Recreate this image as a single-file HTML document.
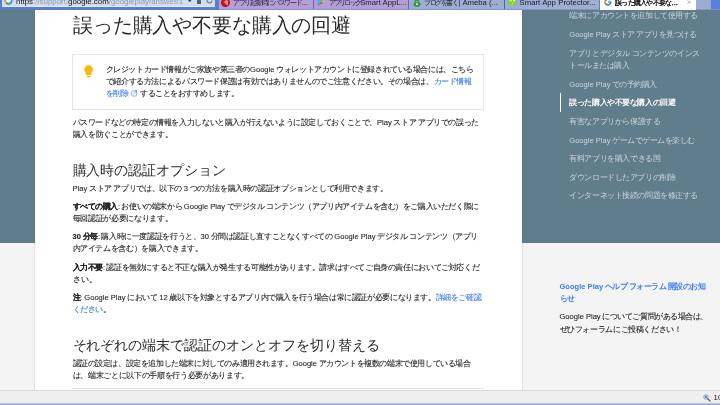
<!DOCTYPE html>
<html lang="ja">
<head>
<meta charset="utf-8">
<title>誤った購入や不要な購入の回避</title>
<style>
html,body{margin:0;padding:0;}
body{width:720px;height:405px;overflow:hidden;position:relative;background:#f4f4f4;font-family:"Liberation Sans",sans-serif;color:#333;}
#page{position:absolute;left:0;top:0;width:720px;height:405px;overflow:hidden;}
.abs{position:absolute;}
/* text lines */
.l{-webkit-text-stroke:0.1px;position:absolute;white-space:nowrap;font-size:7.55px;line-height:12px;height:12px;color:#242424;text-align:justify;text-align-last:justify;}
.e{letter-spacing:0;}
.tt .e{font-size:1.06em;}
.l b{font-weight:bold;color:#222;}
.l a{color:#3c7df0;text-decoration:none;}
.l.f{color:#3c7df0;font-weight:bold;-webkit-text-stroke:0;}
h1,h2{margin:0;font-weight:normal;position:absolute;white-space:nowrap;color:#2b2b2b;text-align:justify;text-align-last:justify;}
h1{font-size:19.85px;line-height:24px;height:24px;}
h2{font-size:13.95px;line-height:18px;height:18px;}
/* chrome */
#topbar{position:absolute;left:0;top:0;width:720px;height:10px;background:#587dcd;overflow:hidden;}
.tab{position:absolute;top:0;height:8.7px;overflow:hidden;}
.tt{position:absolute;font-size:7.3px;line-height:10px;height:10px;white-space:nowrap;color:#20202a;text-align:justify;text-align-last:justify;}
#art{will-change:transform;position:absolute;left:0;top:0;width:720px;height:405px;overflow:hidden;}
/* sidebar */
.sb{position:absolute;background:#607d8b;}
.s{position:absolute;white-space:nowrap;font-size:7.55px;line-height:12px;height:12px;color:#ccd6db;text-align:justify;text-align-last:justify;}
.s.on{color:#fff;font-weight:bold;}
</style>
</head>
<body>
<div id="page">

<!-- page background pieces -->
<div class="sb" style="left:0;top:9.6px;width:35px;height:233.4px;"></div>
<div class="sb" style="left:522px;top:9.6px;width:198px;height:233.4px;"></div>
<div class="abs" id="card" style="left:35px;top:9.6px;width:486.5px;height:381px;background:#fff;box-shadow:0 0 1.5px rgba(0,0,0,.28);"></div>

<!-- tip box + bulb -->
<div class="abs" id="tip" style="left:72px;top:54px;width:412.4px;height:56px;border:1px solid #e5e5e5;box-sizing:border-box;background:#fff;"></div>
<svg class="abs" style="left:84.1px;top:65px;" width="9.2" height="13" viewBox="0 0 9.2 13">
  <circle cx="4.6" cy="4.5" r="4.35" fill="#fbba0a"/>
  <path d="M1.9 7.2h5.4v3H1.9z" fill="#fbba0a"/>
  <rect x="2.7" y="11" width="3.8" height="1.6" rx="0.8" fill="#fbba0a"/>
</svg>
<div class="abs" style="left:72.2px;top:387.6px;width:412.3px;height:0.8px;background:#e2e2e2;"></div>
<div class="abs" style="left:559.8px;top:93.2px;width:1.2px;height:18.6px;background:#fff;"></div>


<!-- status bar -->
<div class="abs" style="left:0;top:390px;width:720px;height:15px;background:#efefef;border-top:0.8px solid #dadada;box-sizing:border-box;"></div>
<div class="abs" style="left:0;top:403px;width:720px;height:2px;background:linear-gradient(#c3cde8,#8ea3d6);"></div>
<svg class="abs" style="left:703.4px;top:393.8px;" width="8" height="8" viewBox="0 0 16 16">
  <circle cx="6" cy="6" r="4.6" fill="#dfe9f7" stroke="#8a94a6" stroke-width="1.6"/>
  <path d="M3.6 6h4.8M6 3.6v4.8" stroke="#2a62c9" stroke-width="1.8"/>
  <path d="M9.6 9.6L14 14" stroke="#8b5a2b" stroke-width="2.6" stroke-linecap="round"/>
</svg>

<!-- browser chrome: address bar + tabs (backgrounds and icons) -->
<div id="topbar">
  <div class="abs" style="left:2px;top:0;width:212.6px;height:7px;background:#d2dcf2;border-bottom:1px solid #e6ecf9;box-sizing:border-box;"></div>
  <div class="abs" style="left:218.7px;top:8.7px;width:501.3px;height:1.3px;background:linear-gradient(#6a7ec4,#9aaadb);"></div>
  <svg class="abs" style="left:4.2px;top:-4.2px;" width="9" height="9" viewBox="0 0 18 18"><circle cx="9" cy="9" r="6.5" fill="#fff" stroke="#4285f4" stroke-width="3.2"/><path d="M4.4 13.6A6.5 6.5 0 0 0 13.6 13.6" fill="none" stroke="#34a853" stroke-width="3.2"/><path d="M2.5 9A6.5 6.5 0 0 0 4.4 13.6" fill="none" stroke="#fbbc05" stroke-width="3.2"/></svg>
  <div class="abs" style="left:196.6px;top:-0.4px;width:4.8px;height:4px;background:#5c5f66;border-radius:.5px;"></div>
  <svg class="abs" style="left:205.8px;top:-2.9px;" width="7" height="7" viewBox="0 0 14 14"><path d="M11.2 4.2A5 5 0 1 0 12 7" fill="none" stroke="#6b6f78" stroke-width="2.1"/><path d="M12.6 1.2v4.4H8.2z" fill="#6b6f78"/></svg>
  <svg class="abs" style="left:188px;top:0;" width="3.6" height="2.4" viewBox="0 0 36 24"><path d="M0 0h36L18 24z" fill="#3f444e"/></svg>

  <div class="tab" style="left:218.7px;width:95.3px;background:#b69dd8;border-right:1px solid #626bb0;box-sizing:border-box;">
    <div class="abs" style="left:2.4px;top:-2.3px;width:9px;height:9px;border-radius:50%;background:radial-gradient(circle at 50% 45%,#d22 0,#b31212 60%,#8e0c0c 100%);"></div>
    <svg class="abs" style="left:4.9px;top:-0.5px;" width="4.4" height="6" viewBox="0 0 9 12"><path d="M6.6 1v10M6.6 2.2C3.5 1 1.6 2.4 1.6 4.2s2 3 5 1.8" fill="none" stroke="#f6dede" stroke-width="1.7"/></svg>
  </div>
  <div class="tab" style="left:314px;width:95px;background:#b69dd8;border-right:1px solid #626bb0;box-sizing:border-box;">
    <svg class="abs" style="left:2.8px;top:-3.2px;" width="8.5" height="9" viewBox="0 0 17 18"><path d="M1 0L10 9 1 18z" fill="#37b8e8"/><path d="M1 0l12 6.5L10 9z" fill="#4fc46a"/><path d="M1 18l12-6.5L10 9z" fill="#ee4455"/><path d="M13 6.5L17 9l-4 2.5L10 9z" fill="#fbc02d"/></svg>
  </div>
  <div class="tab" style="left:409px;width:96px;background:#9eadd2;border-right:1px solid #5563a4;box-sizing:border-box;">
    <svg class="abs" style="left:3.8px;top:0;" width="8" height="7" viewBox="0 0 8 7"><path d="M2 0h4l.5 2.2 1.3 2.3-.9 1.4-1 .9H2.1l-1-.9-.9-1.4 1.3-2.3z" fill="#2f9b3c"/><ellipse cx="4" cy="4.2" rx="1" ry="0.9" fill="#e8f5e8"/><circle cx="3.2" cy="1.6" r=".55" fill="#bfe3c2"/><circle cx="4.8" cy="1.6" r=".55" fill="#bfe3c2"/></svg>
  </div>
  <div class="tab" style="left:505px;width:94px;background:#9eadd2;">
    <svg class="abs" style="left:2.8px;top:0;" width="8.6" height="5.4" viewBox="0 0 8.6 5.4"><rect width="8.6" height="5.4" fill="#84d62e"/><rect x="1.6" y="0" width="2" height="1.4" fill="#d8f2b8"/><rect x="5" y="0" width="2" height="1.4" fill="#d8f2b8"/><circle cx="4.4" cy="3.5" r=".6" fill="#f2fbe6"/></svg>
  </div>
  <div class="tab" style="left:599px;width:96.5px;background:#fff;height:10px;border-left:1px solid #6c80c0;box-sizing:border-box;">
    <svg class="abs" style="left:4.2px;top:-2.4px;" width="8" height="8" viewBox="0 0 18 18"><path d="M15.5 9a6.5 6.5 0 1 1-2-4.7" fill="none" stroke="#4285f4" stroke-width="3.2"/><path d="M9 9h7" stroke="#4285f4" stroke-width="3"/><path d="M2.5 9a6.5 6.5 0 0 0 6.5 6.5c1.8 0 3.3-.7 4.5-1.8" fill="none" stroke="#34a853" stroke-width="3.2"/><path d="M3.4 5.6A6.5 6.5 0 0 0 2.5 9c0 1.2.3 2.3.9 3.3" fill="none" stroke="#fbbc05" stroke-width="3.2"/><path d="M3.4 5.7A6.5 6.5 0 0 1 13.5 4.3" fill="none" stroke="#ea4335" stroke-width="3.2"/></svg>
  </div>
  <div class="tab" style="left:695.5px;width:15.5px;background:#9dadd2;"></div>
  <div class="tab" style="left:711px;width:9px;background:#5a81d6;"></div>
  <svg class="abs" style="left:686.7px;top:0.2px;" width="4.4" height="4.4" viewBox="0 0 6 6"><path d="M0.6 0.6L5.4 5.4M5.4 0.6L0.6 5.4" stroke="#999" stroke-width="0.9" fill="none"/></svg>
</div>

<!-- all text: article, sidebar nav, forum promo, browser chrome labels -->
<div id="art">
<h1 style="left:73px;top:13px;width:278px;letter-spacing:-0.172px;">誤った購入や不要な購入の回避</h1>
<div class="l" style="left:105.7px;top:64px;width:368px;letter-spacing:-0.41px;">クレジットカード情報がご家族や第三者の<span class="e">Google</span> ウォレットアカウントに登録されている場合には、こちら</div>
<div class="l" style="left:105.7px;top:76px;width:366px;letter-spacing:-0.384px;">で紹介する方法によるパスワード保護は有効ではありませんのでご注意ください。その場合は、<a href="#">カード情報</a></div>
<div class="l" style="left:105.7px;top:88px;width:132.5px;letter-spacing:-0.472px;"><a href="#">を削除 <svg width="6.6" height="6.6" viewBox="0 0 12 12" style="vertical-align:-0.8px;margin-left:0.7px;margin-right:1.1px"><rect x="1" y="1.9" width="9.1" height="9.1" rx="1.6" fill="none" stroke="#5b93f5" stroke-width="1.25"/><path d="M4.3 7.7L10.8 1.2M7.4 1.1h3.5v3.5" fill="none" stroke="#4b88f3" stroke-width="1.2"/></svg></a> することをおすすめします。</div>
<div class="l" style="left:72.5px;top:117px;width:406.3px;letter-spacing:-0.396px;">パスワードなどの特定の情報を入力しないと購入が行えないように設定しておくことで、<span class="e">Play</span> ストア アプリでの誤った</div>
<div class="l" style="left:72.5px;top:129px;width:100px;letter-spacing:-0.339px;">購入を防ぐことができます。</div>
<h2 style="left:72.5px;top:161px;width:153.5px;letter-spacing:-0.082px;">購入時の認証オプション</h2>
<div class="l" style="left:72.5px;top:183px;width:315px;letter-spacing:-0.398px;"><span class="e">Play</span> ストア アプリでは、以下の <span class="e">3</span> つの方法を購入時の認証オプションとして利用できます。</div>
<div class="l" style="left:72.5px;top:201px;width:406.3px;letter-spacing:-0.418px;"><b>すべての購入</b>: お使いの端末から <span class="e">Google Play</span> でデジタル コンテンツ（アプリ内アイテムを含む）をご購入いただく際に</div>
<div class="l" style="left:72.5px;top:213px;width:100px;letter-spacing:-0.339px;">毎回認証が必要になります。</div>
<div class="l" style="left:72.5px;top:231px;width:405.5px;letter-spacing:-0.383px;"><b><span class="e">30</span> 分毎</b>: 購入時に一度認証を行うと、<span class="e">30</span> 分間は認証し直すことなくすべての <span class="e">Google Play</span> デジタル コンテンツ（アプリ</div>
<div class="l" style="left:72.5px;top:243px;width:130px;letter-spacing:-0.377px;">内アイテムを含む）を購入できます。</div>
<div class="l" style="left:72.5px;top:262px;width:406.7px;letter-spacing:-0.398px;"><b>入力不要</b>: 認証を無効にすると不正な購入が発生する可能性があります。請求はすべてご自身の責任においてご対応くだ</div>
<div class="l" style="left:72.5px;top:274px;width:24px;letter-spacing:-0.136px;">さい。</div>
<div class="l" style="left:72.5px;top:292px;width:408.7px;letter-spacing:-0.403px;"><b>注</b><span class="e">: Google Play</span> において <span class="e">12</span> 歳以下を対象とするアプリ内で購入を行う場合は常に認証が必要になります。<a href="#">詳細をご確認</a></div>
<div class="l" style="left:72.5px;top:304px;width:37.7px;letter-spacing:-0.543px;"><a href="#">ください</a>。</div>
<h2 style="left:72.5px;top:336px;width:307.5px;letter-spacing:-0.041px;">それぞれの端末で認証のオンとオフを切り替える</h2>
<div class="l" style="left:72.5px;top:358px;width:398px;letter-spacing:-0.417px;">認証の設定は、設定を追加した端末に対してのみ適用されます。<span class="e">Google</span> アカウントを複数の端末で使用している場合</div>
<div class="l" style="left:72.5px;top:370px;width:176.5px;letter-spacing:-0.344px;">は、端末ごとに以下の手順を行う必要があります。</div>
<div class="s" style="left:569.3px;top:10px;width:128.7px;letter-spacing:-0.454px;">端末にアカウントを追加して使用する</div>
<div class="s" style="left:569.3px;top:29px;width:127px;letter-spacing:-0.515px;"><span class="e">Google Play</span> ストア アプリを見つける</div>
<div class="s" style="left:569.3px;top:48px;width:130.5px;letter-spacing:-0.445px;">アプリとデジタル コンテンツのインス</div>
<div class="s" style="left:569.3px;top:60px;width:60px;letter-spacing:-0.55px;">トールまたは購入</div>
<div class="s" style="left:569.3px;top:79px;width:87.5px;letter-spacing:-0.572px;"><span class="e">Google Play</span> での予約購入</div>
<div class="s on" style="left:569.3px;top:97px;width:106px;letter-spacing:-0.458px;">誤った購入や不要な購入の回避</div>
<div class="s" style="left:569.3px;top:116px;width:91px;letter-spacing:-0.45px;">有害なアプリから保護する</div>
<div class="s" style="left:569.3px;top:135px;width:125.5px;letter-spacing:-0.508px;"><span class="e">Google Play</span> ゲームでゲームを楽しむ</div>
<div class="s" style="left:569.3px;top:153px;width:91px;letter-spacing:-0.45px;">有料アプリを購入できる国</div>
<div class="s" style="left:569.3px;top:172px;width:106px;letter-spacing:-0.458px;">ダウンロードしたアプリの削除</div>
<div class="s" style="left:569.3px;top:190px;width:128.7px;letter-spacing:-0.454px;">インターネット接続の問題を修正する</div>
<div class="l f" style="left:559.5px;top:281px;width:145.5px;letter-spacing:-0.551px;"><span class="e">Google Play</span> ヘルプ フォーラム 開設のお知</div>
<div class="l f" style="left:559.5px;top:293px;width:15px;letter-spacing:-0.706px;">らせ</div>
<div class="l" style="left:559.5px;top:311px;width:148.5px;letter-spacing:-0.474px;"><span class="e">Google Play</span> についてご質問がある場合は、</div>
<div class="l" style="left:559.5px;top:324px;width:122px;letter-spacing:-0.401px;">ぜひフォーラムにご投稿ください！</div>
<div class="tt" style="left:16px;top:-3.1px;width:167.5px;letter-spacing:-0.032px;font-size:7.95px;color:#979ca6;"><span style="color:#222">https</span>://support.<span style="color:#111">google.com</span>/googleplay/answer/1</div>
<div class="tt" style="left:233px;top:-1.9px;width:75px;letter-spacing:-1.321px;">アプリ起動時にパスワード<span class="e">...</span></div>
<div class="tt" style="left:329px;top:-1.9px;width:77.7px;letter-spacing:-1.834px;">アプリロック <span class="e">Smart AppL...</span></div>
<div class="tt" style="left:424px;top:-1.9px;width:74px;letter-spacing:-1.398px;">ブログを書く <span class="e">| Ameba (...</span></div>
<div class="tt" style="left:519.6px;top:-1.9px;width:76px;letter-spacing:0.028px;"><span class="e">Smart App Protector...</span></div>
<div class="tt" style="left:615px;top:-1.9px;width:63px;letter-spacing:-0.76px;color:#000;-webkit-text-stroke:0.25px;">誤った購入や不要な<span class="e">...</span></div>
<div class="tt" style="left:713.6px;top:393.2px;font-size:7.4px;color:#1a1a1a;-webkit-text-stroke:0;"><span class="e">100%</span></div>
</div>

</div>
</body>
</html>
